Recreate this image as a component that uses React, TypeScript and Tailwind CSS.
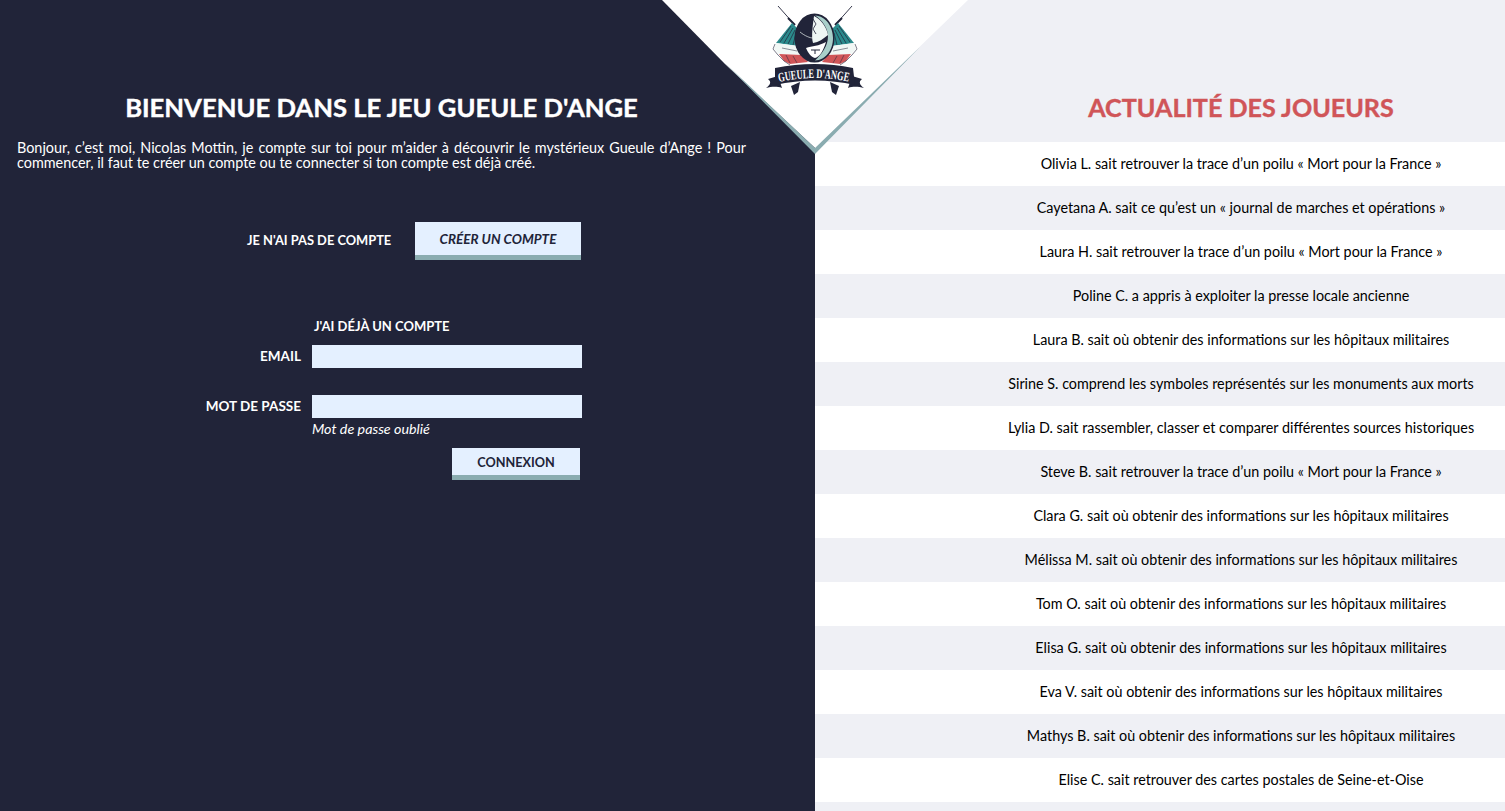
const players = [
  "Olivia L. sait retrouver la trace d’un poilu « Mort pour la France »",
  "Cayetana A. sait ce qu’est un « journal de marches et opérations »",
  "Laura H. sait retrouver la trace d’un poilu « Mort pour la France »",
  "Poline C. a appris à exploiter la presse locale ancienne",
  "Laura B. sait où obtenir des informations sur les hôpitaux militaires",
  "Sirine S. comprend les symboles représentés sur les monuments aux morts",
  "Lylia D. sait rassembler, classer et comparer différentes sources historiques",
  "Steve B. sait retrouver la trace d’un poilu « Mort pour la France »",
  "Clara G. sait où obtenir des informations sur les hôpitaux militaires",
  "Mélissa M. sait où obtenir des informations sur les hôpitaux militaires",
  "Tom O. sait où obtenir des informations sur les hôpitaux militaires",
  "Elisa G. sait où obtenir des informations sur les hôpitaux militaires",
  "Eva V. sait où obtenir des informations sur les hôpitaux militaires",
  "Mathys B. sait où obtenir des informations sur les hôpitaux militaires",
  "Elise C. sait retrouver des cartes postales de Seine-et-Oise",
  "",
];

function FlagHalf() {
  return (
    <g>
      <path d="M778 6 L794 24" stroke="#212439" strokeWidth="0.9" />
      <path d="M788 18 L795 25" stroke="#212439" strokeWidth="2" />
      <path d="M792 23 L797 28 L798 46 L776 43 Z" fill="#2b8a8c" />
      <path d="M791 26 L780 42 M793 28 L784 43 M795 30 L788 44 M796 33 L793 45" stroke="#212439" strokeWidth="0.7" />
      <path d="M776 43 L798 46 L802 55 L779 54 L774 49 Z" fill="#f1f7f5" />
      <path d="M779 54 L802 55 L808 62 L790 64 L784 61 Z" fill="#d05558" />
      <path d="M775 44 L773 49 L778 55 L784 61 L790 65" stroke="#212439" strokeWidth="0.6" fill="none" />
      <path d="M786 55 L790 63 M793 56 L797 63 M782 48 L797 51" stroke="#212439" strokeWidth="0.5" />
    </g>
  );
}

// triangle and logo, in page coordinates
function TopBadge() {
  return (
    <svg
      className="absolute left-[661px] top-0 w-[307px] h-[156px]"
      viewBox="661 0 307 156"
    >
      <polygon points="662,0 968,0 815,148 725,64" fill="#ffffff" />
      <polygon points="725,63 815,148 920,47 815,154" fill="#8aacb0" />

      <FlagHalf />
      <g transform="translate(1630 0) scale(-1 1)">
        <FlagHalf />
      </g>

      <ellipse cx="814.5" cy="38" rx="20" ry="24.5" fill="#212439" />
      <path d="M815 15.5 C826 16 833 27 833 38 C833 50 826 60 815 60.5 C822 54 828 46 828 36 C828 28 822 20 815 15.5 Z" fill="#a9cfca" />
      <path d="M814 16 C821 19 827 28 828 35 C823 39 819 42 813 43 C811 36 813 24 814 16 Z" fill="#eef6f4" />
      <path d="M800 32 C805 36 810 38 813 38" stroke="#eef6f4" strokeWidth="0.7" fill="none" />
      <path d="M806 48 C812 46 819 46 826 42 C823 52 819 57 815 58 C811 57 808 53 806 48 Z" fill="#ffffff" />
      <path d="M813 19 L816 24 L813 29 L816 34" stroke="#212439" strokeWidth="0.8" fill="none" />
      <path d="M811 50 L820 50 M815 50 L815 54" stroke="#212439" strokeWidth="1" />

      <path d="M766 88 C770 85 772 82 768 79 L778 76 L782 88 C776 86 771 87 766 88 Z" fill="#212439" />
      <path d="M864 88 C860 85 858 82 862 79 L852 76 L848 88 C854 86 859 87 864 88 Z" fill="#212439" />
      <path d="M791 86 L800 82 L798 92 L794 95 Z" fill="#212439" />
      <path d="M839 86 L830 82 L832 92 L836 95 Z" fill="#212439" />
      <path d="M775 68 Q815 60 853 68 L855 85 Q815 76 775 85 Z" fill="#212439" />
      <path id="banner-arc" d="M779 82 Q815 74 850 82" fill="none" />
      <text
        fontFamily="'Liberation Serif', serif"
        fontSize="13"
        fontWeight="700"
        fill="#ffffff"
      >
        <textPath href="#banner-arc" textLength="70" lengthAdjust="spacingAndGlyphs">
          GUEULE D'ANGE
        </textPath>
      </text>
    </svg>
  );
}

function ActionButton({ label, className }: { label: string; className: string }) {
  return (
    <button
      className={
        "bg-[#e4f0ff] border-b-[5px] border-[#8aacb0] text-[#212439] font-bold flex items-center justify-center pt-[2px] " +
        className
      }
    >
      {label}
    </button>
  );
}

export default function App() {
  return (
    <div className="relative h-[811px] w-full overflow-hidden grid grid-cols-[815px_1fr] font-['Lato',sans-serif]">
      <div className="bg-[#212439] text-white pt-[92px] pl-[17px]">
        <div className="w-[729px]">
          <h1 className="text-center text-[25.65px] leading-[30px] font-bold [-webkit-text-stroke:0.4px_white]">
            BIENVENUE DANS LE JEU GUEULE D'ANGE
          </h1>
          <p className="mt-[18px] text-[14.4px] leading-[15px] text-justify">
            Bonjour, c’est moi, Nicolas Mottin, je compte sur toi pour m’aider à découvrir le mystérieux Gueule d’Ange ! Pour commencer, il faut te créer un compte ou te connecter si ton compte est déjà créé.
          </p>
        </div>

        <div className="mt-[52px] flex items-center pl-[230px]">
          <span className="w-[144px] text-[12.85px] font-bold whitespace-nowrap">JE N'AI PAS DE COMPTE</span>
          <ActionButton label="CRÉER UN COMPTE" className="ml-[24px] w-[166px] h-[38px] italic text-[13.5px]" />
        </div>

        <div className="mt-[59px] pl-[297px] text-[13px] leading-[15px] font-bold">J'AI DÉJÀ UN COMPTE</div>

        <div className="mt-[11px] flex items-center">
          <label className="w-[284px] text-right text-[13.5px] font-bold">EMAIL</label>
          <input className="ml-[11px] w-[270px] h-[23px] bg-[#e4f0ff]" />
        </div>
        <div className="mt-[27px] flex items-center">
          <label className="w-[284px] text-right text-[13.5px] font-bold">MOT DE PASSE</label>
          <input className="ml-[11px] w-[270px] h-[23px] bg-[#e4f0ff]" />
        </div>
        <div className="mt-[3px] pl-[295px] text-[14.3px] leading-[15px] italic">Mot de passe oublié</div>
        <div className="mt-[12px] pl-[435px]">
          <ActionButton label="CONNEXION" className="w-[128px] h-[32px] text-[12.7px]" />
        </div>
      </div>

      <div className="bg-[#eff0f5] text-black">
        <div className="h-[142px] pl-[162px] pt-[92px]">
          <h2 className="text-center text-[25.1px] leading-[31px] font-bold text-[#d05558] [-webkit-text-stroke:0.4px_#d05558]">
            ACTUALITÉ DES JOUEURS
          </h2>
        </div>
        {players.map((line, i) => (
          <div
            key={i}
            className={
              "h-[44px] pl-[162px] flex items-center justify-center text-[14.35px] leading-[20px] " +
              (i % 2 === 0 ? "bg-white" : "bg-[#eff0f5]")
            }
          >
            {line}
          </div>
        ))}
      </div>

      <TopBadge />
    </div>
  );
}
